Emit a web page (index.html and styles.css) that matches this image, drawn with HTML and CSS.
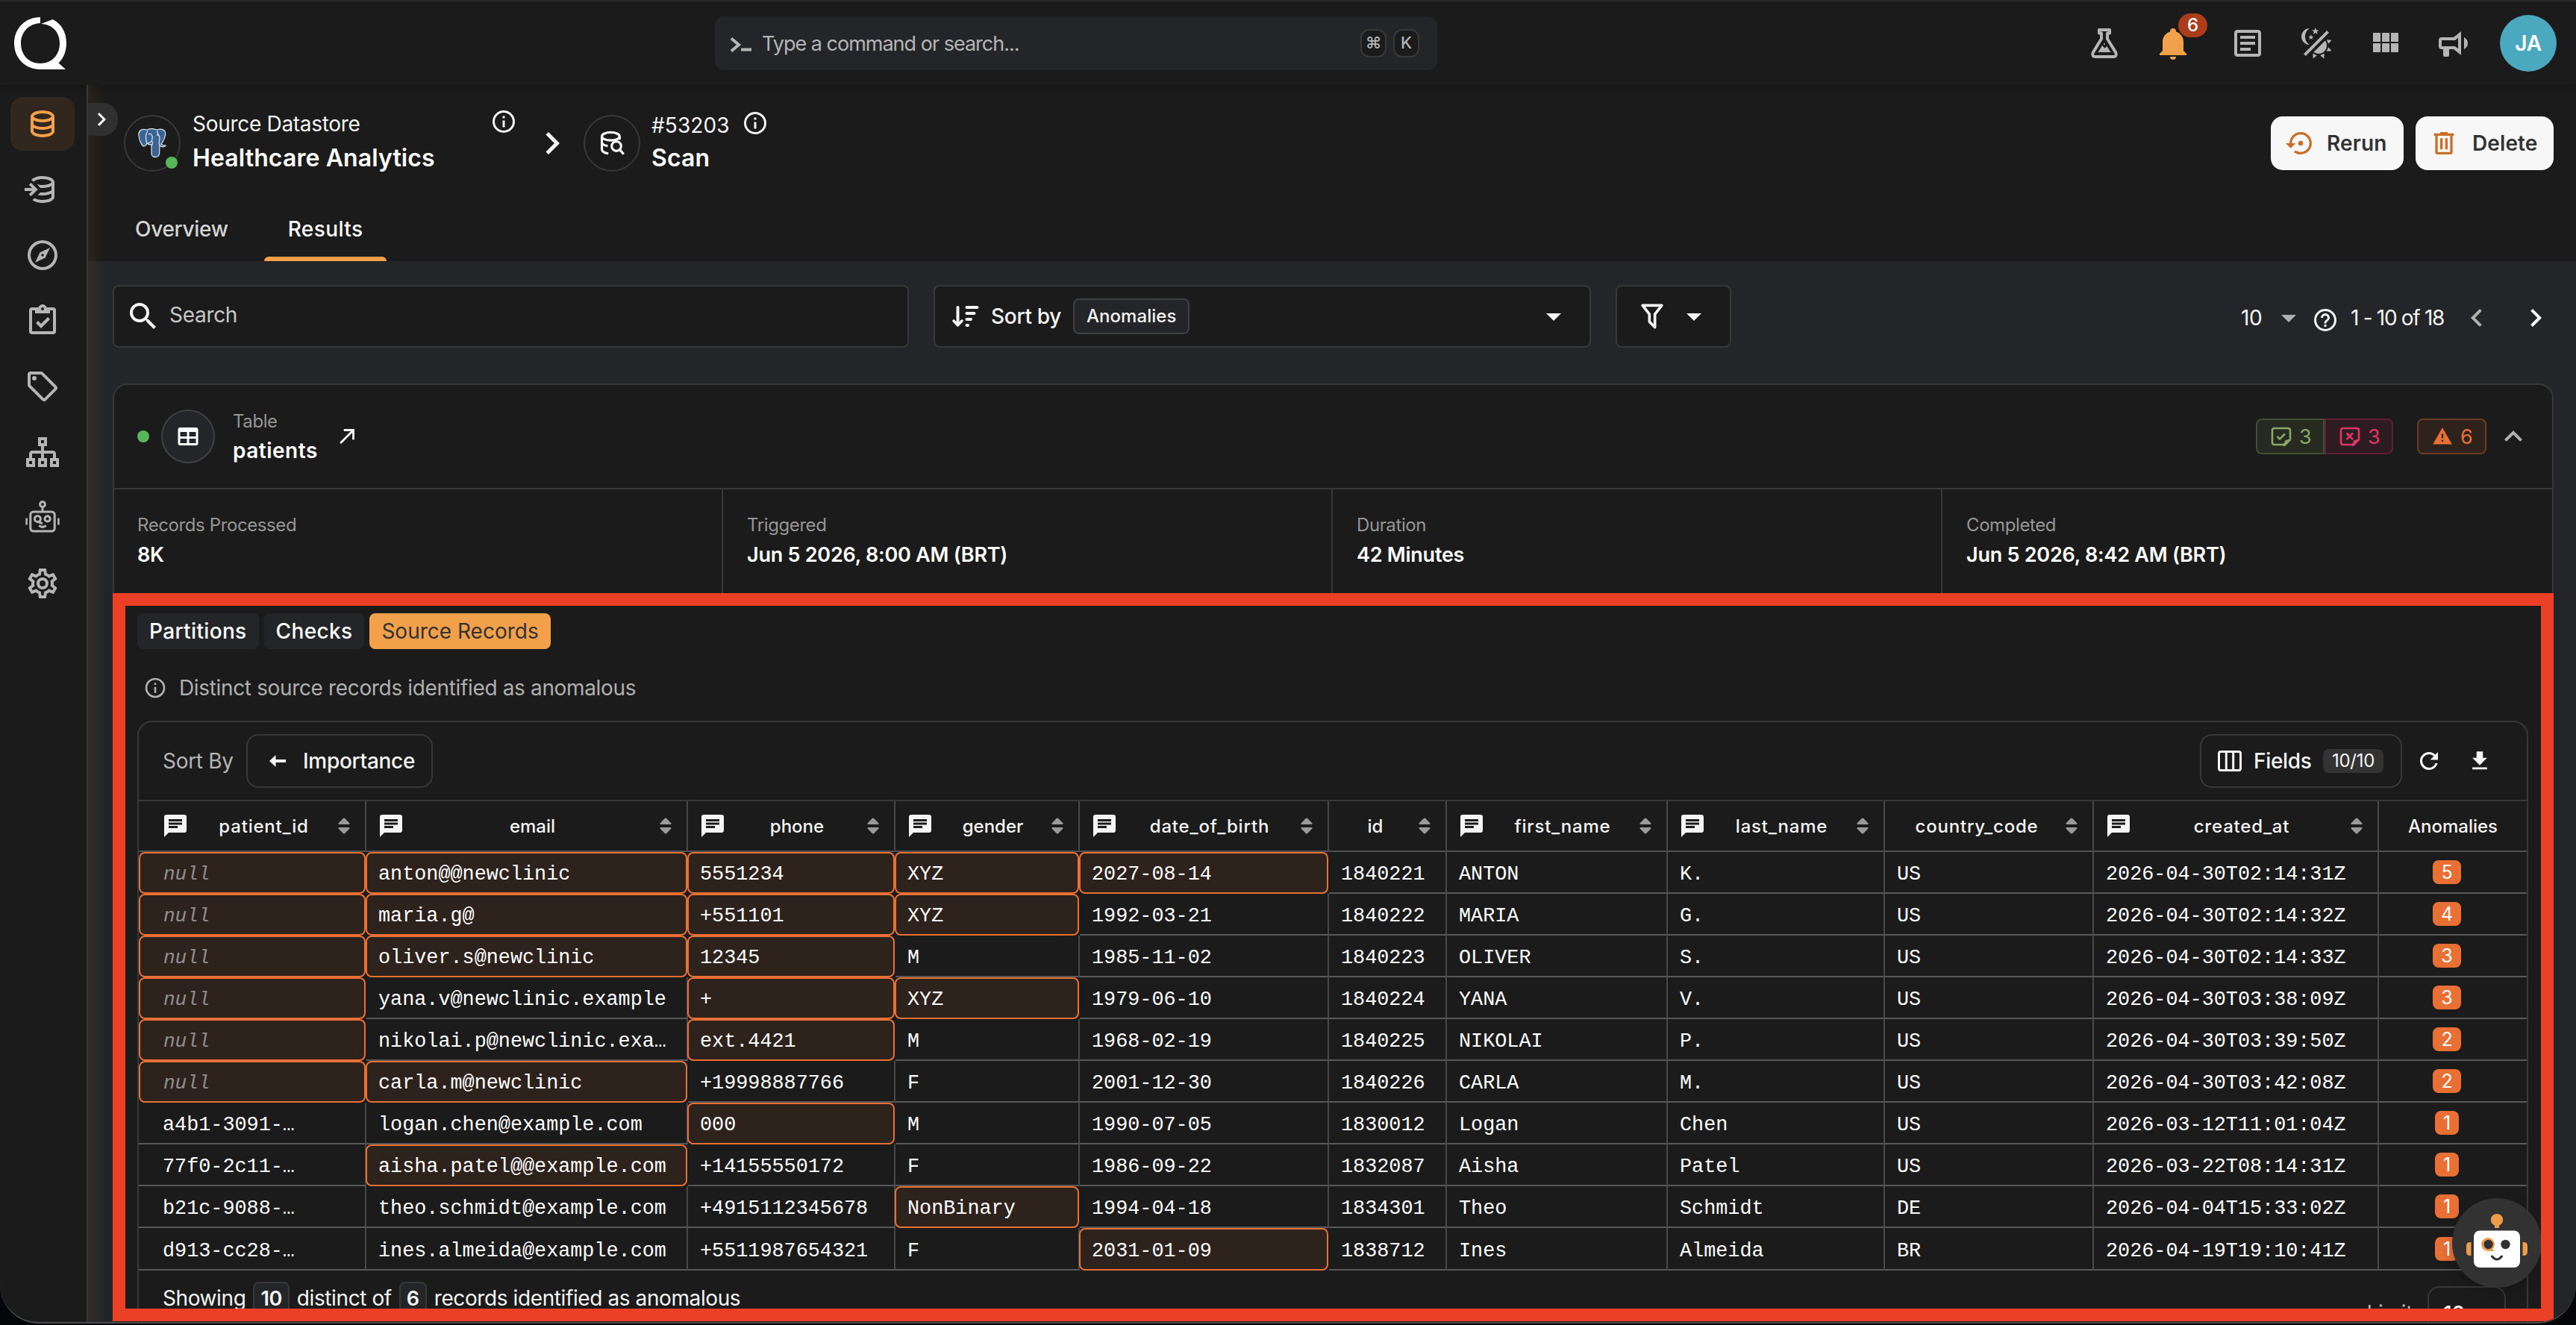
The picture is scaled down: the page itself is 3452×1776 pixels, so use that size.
FILE: index.html
```
<!DOCTYPE html>
<html lang="en">
<head>
    <meta charset="UTF-8">
    <meta name="viewport" content="width=device-width, initial-scale=1.0">
    <title>Scan Results - Healthcare Analytics</title>
    <link rel="stylesheet" href="styles.css">
</head>
<body>
    <!-- Icon sprite -->
    <svg class="sprite" xmlns="http://www.w3.org/2000/svg">
        <symbol id="i-db" viewBox="0 0 24 24"><path d="M12 3C7.58 3 4 4.79 4 7V17C4 19.21 7.59 21 12 21S20 19.21 20 17V7C20 4.79 16.42 3 12 3M18 17C18 17.5 15.87 19 12 19S6 17.5 6 17V14.77C7.61 15.55 9.72 16 12 16S16.39 15.55 18 14.77V17M18 12.45C16.7 13.4 14.42 14 12 14C9.58 14 7.3 13.4 6 12.45V9.64C7.47 10.47 9.61 11 12 11C14.39 11 16.53 10.47 18 9.64V12.45M12 9C8.13 9 6 7.5 6 7S8.13 5 12 5C15.87 5 18 6.5 18 7S15.87 9 12 9Z"/></symbol>
        <symbol id="i-db-in" viewBox="0 0 24 24"><path d="M12 3C8.6 3 5.7 4 4.5 5.6L6.6 7.3C6.2 7.100 6 7 6.100 6.800C6.500 6.200 8.600 5 12 5C15.870 5 18 6.500 18 7S15.870 9 12 9C10.500 9 9.200 8.800 8.200 8.400L10.500 10.900C11 11 11.500 11 12 11C14.390 11 16.530 10.470 18 9.640V12.450C16.700 13.400 14.420 14 12 14H10.600L8.700 15.800C9.700 15.930 10.900 16 12 16C14.280 16 16.390 15.550 18 14.770V17C18 17.500 15.870 19 12 19C9.400 19 7.600 18.300 6.700 17.700L5.200 19.100C6.700 20.300 9.200 21 12 21C16.410 21 20 19.210 20 17V7C20 4.790 16.420 3 12 3Z"/><path d="M0 11H5L2.900 8.900L4.300 7.500L8.800 12L4.300 16.500L2.900 15.100L5 13H0Z"/></symbol>
        <symbol id="i-compass" viewBox="0 0 24 24"><path d="M7,17L10.2,10.2L17,7L13.8,13.8L7,17M12,11.1A0.9,0.9 0 0,0 11.1,12A0.9,0.9 0 0,0 12,12.9A0.9,0.9 0 0,0 12.9,12A0.9,0.9 0 0,0 12,11.1M12,2A10,10 0 0,1 22,12A10,10 0 0,1 12,22A10,10 0 0,1 2,12A10,10 0 0,1 12,2M12,4A8,8 0 0,0 4,12A8,8 0 0,0 12,20A8,8 0 0,0 20,12A8,8 0 0,0 12,4Z"/></symbol>
        <symbol id="i-clipboard" viewBox="0 0 24 24"><path d="M19,3H14.82C14.4,1.84 13.3,1 12,1C10.7,1 9.6,1.84 9.18,3H5A2,2 0 0,0 3,5V19A2,2 0 0,0 5,21H19A2,2 0 0,0 21,19V5A2,2 0 0,0 19,3M12,3A1,1 0 0,1 13,4A1,1 0 0,1 12,5A1,1 0 0,1 11,4A1,1 0 0,1 12,3M7,7H17V5H19V19H5V5H7V7M7.5,13.5L9,12L11,14L15.5,9.5L17,11L11,17L7.5,13.5Z"/></symbol>
        <symbol id="i-tag" viewBox="0 0 24 24"><path d="M21.41 11.58L12.41 2.58A2 2 0 0 0 11 2H4A2 2 0 0 0 2 4V11A2 2 0 0 0 2.59 12.42L11.59 21.42A2 2 0 0 0 13 22A2 2 0 0 0 14.41 21.41L21.41 14.41A2 2 0 0 0 22 13A2 2 0 0 0 21.41 11.58M13 20L4 11V4H11L20 13M6.5 5A1.5 1.5 0 1 1 5 6.5A1.5 1.5 0 0 1 6.5 5Z"/></symbol>
        <symbol id="i-sitemap" viewBox="0 0 24 24"><path d="M9 2V8H11V11H5C3.89 11 3 11.89 3 13V16H1V22H7V16H5V13H11V16H9V22H15V16H13V13H19V16H17V22H23V16H21V13C21 11.89 20.11 11 19 11H13V8H15V2H9M11 4H13V6H11V4M3 18H5V20H3V18M11 18H13V20H11V18M19 18H21V20H19V18Z"/></symbol>
        <symbol id="i-robot" viewBox="0 0 24 24"><g fill="none" stroke="currentColor" stroke-width="1.5"><circle cx="12" cy="3" r="1.700"/><path d="M12 4.700V8"/><rect x="3.900" y="8" width="16.200" height="13" rx="2"/><path d="M1.300 12.200V16.700M22.700 12.200V16.700" stroke-width="1.300"/><circle cx="8.700" cy="12.700" r="2"/><path d="M9.500 15L12 15.800"/><circle cx="15.300" cy="12.700" r="1.800"/><path d="M9.600 17.200Q12 19.200 14.400 17.200"/></g></symbol>
        <symbol id="i-cog" viewBox="0 0 24 24"><path d="M12,8A4,4 0 0,1 16,12A4,4 0 0,1 12,16A4,4 0 0,1 8,12A4,4 0 0,1 12,8M12,10A2,2 0 0,0 10,12A2,2 0 0,0 12,14A2,2 0 0,0 14,12A2,2 0 0,0 12,10M10,22C9.75,22 9.54,21.82 9.5,21.58L9.13,18.93C8.5,18.68 7.96,18.34 7.44,17.94L4.95,18.95C4.73,19.03 4.46,18.95 4.34,18.73L2.34,15.27C2.21,15.05 2.27,14.78 2.46,14.63L4.57,12.97L4.5,12L4.57,11L2.46,9.37C2.27,9.22 2.21,8.95 2.34,8.73L4.34,5.27C4.46,5.05 4.73,4.96 4.95,5.05L7.44,6.05C7.96,5.66 8.5,5.32 9.13,5.07L9.5,2.42C9.54,2.18 9.75,2 10,2H14C14.25,2 14.46,2.18 14.5,2.42L14.87,5.07C15.5,5.32 16.04,5.66 16.56,6.05L19.05,5.05C19.27,4.96 19.54,5.05 19.66,5.27L21.66,8.73C21.79,8.95 21.73,9.22 21.54,9.37L19.43,11L19.5,12L19.43,13L21.54,14.63C21.73,14.78 21.79,15.05 21.66,15.27L19.66,18.73C19.54,18.95 19.27,19.04 19.05,18.95L16.56,17.95C16.04,18.34 15.5,18.68 14.87,18.93L14.5,21.58C14.46,21.82 14.25,22 14,22H10M11.25,4L10.88,6.61C9.68,6.86 8.62,7.5 7.85,8.39L5.44,7.35L4.69,8.65L6.8,10.2C6.4,11.37 6.4,12.64 6.8,13.8L4.68,15.36L5.43,16.66L7.86,15.62C8.63,16.5 9.68,17.14 10.87,17.38L11.24,20H12.76L13.13,17.39C14.32,17.14 15.37,16.5 16.14,15.62L18.57,16.66L19.32,15.36L17.2,13.81C17.6,12.64 17.6,11.37 17.2,10.2L19.31,8.65L18.56,7.35L16.15,8.39C15.38,7.5 14.32,6.86 13.12,6.62L12.75,4H11.25Z"/></symbol>
        <symbol id="i-prompt" viewBox="0 0 30 20"><path d="M2 1.500L12 10L2 18.500" fill="none" stroke="currentColor" stroke-width="4"/><path d="M15 14.500H29V18.500H15Z"/></symbol>
        <symbol id="i-flask" viewBox="0 0 24 24"><path d="M8.500 3H15.500V5.200H14V9L19.600 18.200C20.300 19.600 19.800 21 18.200 21H5.800C4.200 21 3.700 19.600 4.400 18.200L10 9V5.200H8.500Z" fill="none" stroke="currentColor" stroke-width="2" stroke-linejoin="round"/><path d="M7.800 18L10.500 13.500L12.200 15.300L13.800 14L16.200 18Z"/><circle cx="12" cy="12.500" r=".5"/></symbol>
        <symbol id="i-bell" viewBox="0 0 24 24"><path d="M21,19V20H3V19L5,17V11C5,7.9 7.03,5.17 10,4.29C10,4.19 10,4.1 10,4A2,2 0 0,1 12,2A2,2 0 0,1 14,4C14,4.1 14,4.19 14,4.29C16.97,5.17 19,7.9 19,11V17L21,19M14,21A2,2 0 0,1 12,23A2,2 0 0,1 10,21"/></symbol>
        <symbol id="i-text" viewBox="0 0 24 24"><path d="M5,3C3.89,3 3,3.89 3,5V19C3,20.11 3.89,21 5,21H19C20.11,21 21,20.11 21,19V5C21,3.89 20.11,3 19,3H5M5,5H19V19H5V5M7,7V9H17V7H7M7,11V13H17V11H7M7,15V17H14V15H7Z"/></symbol>
        <symbol id="i-theme" viewBox="0 0 24 24"><path d="M7.5,2C5.71,3.15 4.5,5.18 4.5,7.5C4.5,9.82 5.71,11.85 7.53,13C4.46,13 2,10.54 2,7.5A5.5,5.5 0 0,1 7.5,2M19.07,3.5L20.5,4.93L4.93,20.5L3.5,19.07L19.07,3.5M12.89,5.93L11.41,5L9.97,6L10.39,4.3L9,3.24L10.75,3.12L11.33,1.47L12,3.1L13.73,3.13L12.38,4.26L12.89,5.93M9.59,9.54L8.43,8.81L7.31,9.59L7.65,8.27L6.56,7.44L7.92,7.35L8.37,6.06L8.88,7.33L10.24,7.36L9.19,8.23L9.59,9.54M19,13.5A5.5,5.5 0 0,1 13.5,19C12.28,19 11.15,18.6 10.24,17.93L17.93,10.24C18.6,11.15 19,12.28 19,13.5M14.6,20.08L17.37,18.93L17.13,22.28L14.6,20.08M18.93,17.38L20.08,14.61L22.28,17.15L18.93,17.38M20.08,12.42L18.94,9.64L22.28,9.88L20.08,12.42M9.63,18.93L12.4,20.08L9.87,22.27L9.63,18.93Z"/></symbol>
        <symbol id="i-apps" viewBox="0 0 24 24"><path d="M16,5V11H21V5M10,11H15V5H10M16,18H21V12H16M10,18H15V12H10M4,18H9V12H4M4,11H9V5H4V11Z"/></symbol>
        <symbol id="i-horn" viewBox="0 0 24 24"><path d="M12,8H4A2,2 0 0,0 2,10V14A2,2 0 0,0 4,16H5V20A1,1 0 0,0 6,21H8A1,1 0 0,0 9,20V16H12L17,20V4L12,8M15,15.6L13,14H4V10H13L15,8.4V15.6M21.5,12C21.5,13.71 20.54,15.26 19,16V8C20.53,8.75 21.5,10.3 21.5,12Z"/></symbol>
        <symbol id="i-info" viewBox="0 0 24 24"><path d="M11,9H13V7H11M12,20C7.59,20 4,16.41 4,12C4,7.59 7.59,4 12,4C16.41,4 20,7.59 20,12C20,16.41 16.41,20 12,20M12,2A10,10 0 0,0 2,12A10,10 0 0,0 12,22A10,10 0 0,0 22,12A10,10 0 0,0 12,2M11,17H13V11H11V17Z"/></symbol>
        <symbol id="i-help" viewBox="0 0 24 24"><path d="M11,18H13V16H11V18M12,2A10,10 0 0,0 2,12A10,10 0 0,0 12,22A10,10 0 0,0 22,12A10,10 0 0,0 12,2M12,20C7.59,20 4,16.41 4,12C4,7.59 7.59,4 12,4C16.41,4 20,7.59 20,12C20,16.41 16.41,20 12,20M12,6A4,4 0 0,0 8,10H10A2,2 0 0,1 12,8A2,2 0 0,1 14,10C14,12 11,11.75 11,15H13C13,12.75 16,12.5 16,10A4,4 0 0,0 12,6Z"/></symbol>
        <symbol id="i-right" viewBox="0 0 24 24"><path d="M8.59,16.58L13.17,12L8.59,7.41L10,6L16,12L10,18L8.59,16.58Z"/></symbol>
        <symbol id="i-left" viewBox="0 0 24 24"><path d="M15.41,16.58L10.83,12L15.41,7.41L14,6L8,12L14,18L15.41,16.58Z"/></symbol>
        <symbol id="i-up" viewBox="0 0 24 24"><path d="M7.41,15.41L12,10.83L16.59,15.41L18,14L12,8L6,14L7.41,15.41Z"/></symbol>
        <symbol id="i-caret" viewBox="0 0 24 24"><path d="M7,10L12,15L17,10H7Z"/></symbol>
        <symbol id="i-scan" viewBox="0 0 24 24"><g fill="none" stroke="currentColor" stroke-width="2"><ellipse cx="11" cy="6.200" rx="7.500" ry="3.400"/><path d="M3.500 6.200V17.300C3.500 18.900 5.800 20.300 9 20.700M18.500 6.200V9M3.500 11.700C4.300 13 6.300 14 8.500 14.400"/><circle cx="15.800" cy="14.500" r="4"/><path d="M18.700 17.600L22 21.200"/></g></symbol>
        <symbol id="i-rerun" viewBox="0 0 24 24"><path d="M12,3A9,9 0 0,0 3,12H0L4,16L8,12H5A7,7 0 0,1 12,5A7,7 0 0,1 19,12A7,7 0 0,1 12,19C10.5,19 9.09,18.5 7.94,17.7L6.5,19.14C8.04,20.3 9.94,21 12,21A9,9 0 0,0 21,12A9,9 0 0,0 12,3M14,12A2,2 0 0,0 12,10A2,2 0 0,0 10,12A2,2 0 0,0 12,14A2,2 0 0,0 14,12Z"/></symbol>
        <symbol id="i-trash" viewBox="0 0 24 24"><path d="M9,3V4H4V6H5V19A2,2 0 0,0 7,21H17A2,2 0 0,0 19,19V6H20V4H15V3H9M7,6H17V19H7V6M9,8V17H11V8H9M13,8V17H15V8H13Z"/></symbol>
        <symbol id="i-search" viewBox="0 0 24 24"><path d="M9.5,3A6.5,6.5 0 0,1 16,9.5C16,11.11 15.41,12.59 14.44,13.73L14.71,14H15.5L20.5,19L19,20.5L14,15.5V14.71L13.73,14.44C12.59,15.41 11.11,16 9.5,16A6.5,6.5 0 0,1 3,9.5A6.5,6.5 0 0,1 9.5,3M9.5,5C7,5 5,7 5,9.5C5,12 7,14 9.5,14C12,14 14,12 14,9.5C14,7 12,5 9.5,5Z"/></symbol>
        <symbol id="i-sort" viewBox="0 0 36 28"><g fill="none" stroke="currentColor" stroke-linecap="round"><path d="M7.500 2V25" stroke-width="4"/><path d="M2 20L7.500 26L13 20" stroke-width="3.500" stroke-linejoin="round"/><path d="M19.500 2H33.500M19.500 10H29.500M19.500 18H25M19.500 26H21" stroke-width="4"/></g></symbol>
        <symbol id="i-filter" viewBox="0 0 24 24"><path d="M15,19.88C15.04,20.18 14.94,20.5 14.71,20.71C14.32,21.1 13.69,21.1 13.3,20.71L9.29,16.7C9.06,16.47 8.96,16.16 9,15.87V10.75L4.21,4.62C3.87,4.19 3.95,3.56 4.38,3.22C4.57,3.08 4.78,3 5,3V3H19V3C19.22,3 19.43,3.08 19.62,3.22C20.05,3.56 20.13,4.19 19.79,4.62L15,10.75V19.88M7.04,5L11,10.06V15.58L13,17.58V10.05L16.96,5H7.04Z"/></symbol>
        <symbol id="i-table" viewBox="0 0 24 24"><path d="M5,4H19A2,2 0 0,1 21,6V18A2,2 0 0,1 19,20H5A2,2 0 0,1 3,18V6A2,2 0 0,1 5,4M5,8V12H11V8H5M13,8V12H19V8H13M5,14V18H11V14H5M13,14V18H19V14H13Z"/></symbol>
        <symbol id="i-open" viewBox="0 0 24 24"><path d="M5,17.59L15.59,7H9V5H19V15H17V8.41L6.41,19L5,17.59Z"/></symbol>
        <symbol id="i-check" viewBox="0 0 28 28"><path d="M17 25H5C3 25 2 24 2 22V6C2 4 3 3 5 3H23C25 3 26 4 26 6V17" fill="none" stroke="currentColor" stroke-width="2.600"/><path d="M27.200 16.500V19L19 27H16.500V24L18.500 22C18.500 20 19.500 18.500 22 18.500Z"/><path d="M8.500 14L12 17.500L19 10.500" fill="none" stroke="currentColor" stroke-width="2.600"/></symbol>
        <symbol id="i-cross" viewBox="0 0 28 28"><path d="M17 25H5C3 25 2 24 2 22V6C2 4 3 3 5 3H23C25 3 26 4 26 6V17" fill="none" stroke="currentColor" stroke-width="2.600"/><path d="M27.200 16.500V19L19 27H16.500V24L18.500 22C18.500 20 19.500 18.500 22 18.500Z"/><path d="M9.500 9.500L18 18M18 9.500L9.500 18" fill="none" stroke="currentColor" stroke-width="2.600"/></symbol>
        <symbol id="i-alert" viewBox="0 0 24 24"><path d="M13 14H11V9H13M13 18H11V16H13M1 21H23L12 2L1 21Z"/></symbol>
        <symbol id="i-arrow-left" viewBox="0 0 24 18"><path d="M9.500 1L1 9L9.500 17V11H23V7H9.500Z"/></symbol>
        <symbol id="i-columns" viewBox="0 0 32 28"><path d="M4 1.500H28Q30.500 1.500 30.500 4V24Q30.500 26.500 28 26.500H4Q1.500 26.500 1.500 24V4Q1.500 1.500 4 1.500ZM11.300 2V26M20.700 2V26" fill="none" stroke="currentColor" stroke-width="3"/></symbol>
        <symbol id="i-refresh" viewBox="0 0 24 24"><path d="M17.65,6.35C16.2,4.9 14.21,4 12,4A8,8 0 0,0 4,12A8,8 0 0,0 12,20C15.73,20 18.84,17.45 19.73,14H17.65C16.83,16.33 14.61,18 12,18A6,6 0 0,1 6,12A6,6 0 0,1 12,6C13.66,6 15.14,6.69 16.22,7.78L13,11H20V4L17.65,6.35Z"/></symbol>
        <symbol id="i-download" viewBox="0 0 24 24"><path d="M5,20H19V18H5M19,9H15V3H9V9H5L12,16L19,9Z"/></symbol>
        <symbol id="i-message" viewBox="0 0 24 24"><path d="M20,2H4A2,2 0 0,0 2,4V22L6,18H20A2,2 0 0,0 22,16V4A2,2 0 0,0 20,2M6,9H18V11H6M14,14H6V12H14M18,8H6V6H18"/></symbol>
        <symbol id="i-order" viewBox="0 0 16 22"><path d="M7 .8Q8 0 9 .8L15.500 7.500Q16 9 14.500 9H1.500Q0 9 .5 7.500ZM7 21.200Q8 22 9 21.200L15.500 14.500Q16 13 14.500 13H1.500Q0 13 .5 14.500Z"/></symbol>
    </svg>

    <div class="window">
        <header class="topbar">
            <svg class="logo" viewBox="0 0 70 70"><path d="M35 0C15 0 0 15 0 35C0 55 15 70 35 70H69L59.500 61.500C66 55 70 46 70 35C70 20 63 8.500 51.500 3L36 9C51 9.500 61 20 61 35C61 51 50 62 35 62S9 51 9 35C9 20 20 8.500 35 8Z"/></svg>
            <div class="command">
                <svg class="prompt"><use href="#i-prompt"/></svg>
                <span class="placeholder">Type a command or search...</span>
                <kbd>⌘</kbd>
                <kbd>K</kbd>
            </div>
            <div class="actions">
                <svg class="icon"><use href="#i-flask"/></svg>
                <div class="bell">
                    <svg class="icon"><use href="#i-bell"/></svg>
                    <span class="bell-count">6</span>
                </div>
                <svg class="icon"><use href="#i-text"/></svg>
                <svg class="icon"><use href="#i-theme"/></svg>
                <svg class="icon"><use href="#i-apps"/></svg>
                <svg class="icon"><use href="#i-horn"/></svg>
                <span class="avatar">JA</span>
            </div>
        </header>

        <div class="layout">
            <nav class="sidebar">
                <a class="nav-item active"><svg class="icon"><use href="#i-db"/></svg></a>
                <a class="nav-item"><svg class="icon"><use href="#i-db-in"/></svg></a>
                <a class="nav-item"><svg class="icon"><use href="#i-compass"/></svg></a>
                <a class="nav-item"><svg class="icon"><use href="#i-clipboard"/></svg></a>
                <a class="nav-item"><svg class="icon"><use href="#i-tag"/></svg></a>
                <a class="nav-item"><svg class="icon"><use href="#i-sitemap"/></svg></a>
                <a class="nav-item"><svg class="icon"><use href="#i-robot"/></svg></a>
                <a class="nav-item"><svg class="icon"><use href="#i-cog"/></svg></a>
                <span class="expand"><svg><use href="#i-right"/></svg></span>
            </nav>

            <main class="main">
                <div class="page-head">
                    <div class="crumbs">
                        <div class="crumb-icon">
                            <svg class="postgres" viewBox="0 0 38 40">
                                <path d="M12 2C5 0 0 3 1 10C2 17 5 24 8 24C10 24 11 22 12 20C14 22 17 22 18 22V34C18 40 28 40 28.500 34L29 23C32 26 36 25 37 23C34 24 32 22 31 21C35 16 38 8 36 4C33 0 28 1 25 2C20 0 16 0 12 2Z"/>
                                <path class="line" d="M13 3C10 8 10 15 12 20M26 3C24 6 29 9 29 13C29 17 27 19 29 23M18 23C20 21 20 18 18 17M14 8C17 6 20 9 19 14C19 17 16 20 13 20M25 9H27"/>
                            </svg>
                            <span class="status-dot"></span>
                        </div>
                        <div class="crumb-text store">
                            <div class="crumb-label">Source Datastore</div>
                            <div class="crumb-title">Healthcare Analytics</div>
                        </div>
                        <svg class="info store-info"><use href="#i-info"/></svg>
                        <svg class="crumb-sep"><use href="#i-right"/></svg>
                        <div class="crumb-icon"><svg class="scan"><use href="#i-scan"/></svg></div>
                        <div class="crumb-text operation">
                            <div class="crumb-label"><span class="number">#53203</span><svg class="info"><use href="#i-info"/></svg></div>
                            <div class="crumb-title">Scan</div>
                        </div>
                    </div>
                    <div class="head-buttons">
                        <button class="btn rerun"><svg><use href="#i-rerun"/></svg>Rerun</button>
                        <button class="btn delete"><svg><use href="#i-trash"/></svg>Delete</button>
                    </div>
                </div>
                <div class="tabs">
                    <a class="tab">Overview</a>
                    <a class="tab active">Results</a>
                </div>

                <section class="content">
                    <div class="filters">
                        <div class="field search">
                            <svg class="icon"><use href="#i-search"/></svg>
                            <span class="search-text">Search</span>
                        </div>
                        <div class="field sort">
                            <svg class="sort-icon"><use href="#i-sort"/></svg>
                            <span class="sort-text">Sort by</span>
                            <span class="sort-value">Anomalies</span>
                            <svg class="icon"><use href="#i-caret"/></svg>
                        </div>
                        <div class="field filter">
                            <svg class="filter-icon"><use href="#i-filter"/></svg>
                            <svg class="icon"><use href="#i-caret"/></svg>
                        </div>
                        <div class="pager">
                            <span class="page-size">10</span>
                            <svg class="icon muted"><use href="#i-caret"/></svg>
                            <svg class="help"><use href="#i-help"/></svg>
                            <span class="range">1 - 10 of 18</span>
                            <svg class="icon muted"><use href="#i-left"/></svg>
                            <svg class="icon next"><use href="#i-right"/></svg>
                        </div>
                    </div>

                    <div class="card">
                        <div class="card-head">
                            <span class="status-dot"></span>
                            <div class="table-icon"><svg><use href="#i-table"/></svg></div>
                            <div class="table-name">
                                <div class="small-label">Table</div>
                                <div class="name">patients</div>
                            </div>
                            <svg class="open"><use href="#i-open"/></svg>
                            <div class="chips">
                                <span class="chip passed"><svg><use href="#i-check"/></svg>3</span>
                                <span class="chip failed"><svg><use href="#i-cross"/></svg>3</span>
                                <span class="chip anomalies"><svg><use href="#i-alert"/></svg>6</span>
                            </div>
                            <svg class="icon muted"><use href="#i-up"/></svg>
                        </div>
                        <div class="stats">
                            <div class="stat"><div class="small-label">Records Processed</div><div class="value">8K</div></div>
                            <div class="stat"><div class="small-label">Triggered</div><div class="value">Jun 5 2026, 8:00 AM (BRT)</div></div>
                            <div class="stat"><div class="small-label">Duration</div><div class="value">42 Minutes</div></div>
                            <div class="stat"><div class="small-label">Completed</div><div class="value">Jun 5 2026, 8:42 AM (BRT)</div></div>
                        </div>

                        <div class="records">
                            <div class="pills">
                                <span class="pill">Partitions</span>
                                <span class="pill">Checks</span>
                                <span class="pill active">Source Records</span>
                            </div>
                            <div class="hint"><svg><use href="#i-info"/></svg><span>Distinct source records identified as anomalous</span></div>

                            <div class="panel">
                                <div class="panel-bar">
                                    <span class="sort-by">Sort By</span>
                                    <span class="outline-btn importance"><svg><use href="#i-arrow-left"/></svg><span>Importance</span></span>
                                    <span class="outline-btn fields"><svg><use href="#i-columns"/></svg><span class="fields-text">Fields</span><span class="fields-count">10/10</span></span>
                                    <svg class="refresh"><use href="#i-refresh"/></svg>
                                    <svg class="download"><use href="#i-download"/></svg>
                                </div>
                                <div class="grid" id="grid"></div>
                                <div class="panel-foot">
                                    <div class="summary">
                                        <span>Showing</span><b>10</b><span>distinct of</span><b>6</b><span>records identified as anomalous</span>
                                    </div>
                                    <div class="limit"><span>Limit</span><span class="limit-value">10</span></div>
                                </div>
                            </div>
                        </div>
                    </div>
                </section>
            </main>
        </div>

        <div class="assistant">
            <svg viewBox="0 0 120 120">
                <path class="orange" d="M60 21A8 8 0 0 1 63 36.500V40H57V36.500A8 8 0 0 1 60 21ZM25.500 59V77H24Q19 77 19 72V64Q19 59 24 59ZM94.500 59V77H96Q101 77 101 72V64Q101 59 96 59Z"/>
                <rect class="white" x="29" y="43.500" width="62" height="49.500" rx="8"/>
                <circle class="ring" cx="48" cy="62" r="7.500"/>
                <path class="orange" d="M45 68.500H54L57 71H48Z"/>
                <circle class="dark" cx="48.500" cy="62" r="6.200"/>
                <circle class="dark" cx="71.500" cy="62" r="6.200"/>
                <path class="smile" d="M53.500 78Q60 86 66.500 78"/>
            </svg>
        </div>
        <div class="highlight"></div>
    </div>

    <script>
        // name, has description icon, sortable
        const columns = [
            ['patient_id', true, true],
            ['email', true, true],
            ['phone', true, true],
            ['gender', true, true],
            ['date_of_birth', true, true],
            ['id', false, true],
            ['first_name', true, true],
            ['last_name', true, true],
            ['country_code', false, true],
            ['created_at', true, true],
            ['Anomalies', false, false]
        ];

        // values, then the indexes of the anomalous cells
        const rows = [
            [[null, 'anton@@newclinic', '5551234', 'XYZ', '2027-08-14', '1840221', 'ANTON', 'K.', 'US', '2026-04-30T02:14:31Z', 5], [0, 1, 2, 3, 4]],
            [[null, 'maria.g@', '+551101', 'XYZ', '1992-03-21', '1840222', 'MARIA', 'G.', 'US', '2026-04-30T02:14:32Z', 4], [0, 1, 2, 3]],
            [[null, 'oliver.s@newclinic', '12345', 'M', '1985-11-02', '1840223', 'OLIVER', 'S.', 'US', '2026-04-30T02:14:33Z', 3], [0, 1, 2]],
            [[null, 'yana.v@newclinic.example', '+', 'XYZ', '1979-06-10', '1840224', 'YANA', 'V.', 'US', '2026-04-30T03:38:09Z', 3], [0, 2, 3]],
            [[null, 'nikolai.p@newclinic.exa…', 'ext.4421', 'M', '1968-02-19', '1840225', 'NIKOLAI', 'P.', 'US', '2026-04-30T03:39:50Z', 2], [0, 2]],
            [[null, 'carla.m@newclinic', '+19998887766', 'F', '2001-12-30', '1840226', 'CARLA', 'M.', 'US', '2026-04-30T03:42:08Z', 2], [0, 1]],
            [['a4b1-3091-…', 'logan.chen@example.com', '000', 'M', '1990-07-05', '1830012', 'Logan', 'Chen', 'US', '2026-03-12T11:01:04Z', 1], [2]],
            [['77f0-2c11-…', 'aisha.patel@@example.com', '+14155550172', 'F', '1986-09-22', '1832087', 'Aisha', 'Patel', 'US', '2026-03-22T08:14:31Z', 1], [1]],
            [['b21c-9088-…', 'theo.schmidt@example.com', '+4915112345678', 'NonBinary', '1994-04-18', '1834301', 'Theo', 'Schmidt', 'DE', '2026-04-04T15:33:02Z', 1], [3]],
            [['d913-cc28-…', 'ines.almeida@example.com', '+5511987654321', 'F', '2031-01-09', '1838712', 'Ines', 'Almeida', 'BR', '2026-04-19T19:10:41Z', 1], [4]]
        ];

        let html = '';
        for (const [name, described, sortable] of columns) {
            html += `<div class="th${described || !sortable ? '' : ' plain'}${name.includes('_') ? ' snake' : ''}">`;
            if (described) html += '<svg class="message"><use href="#i-message"/></svg>';
            html += `<span>${name}</span>`;
            if (sortable) html += '<svg class="order"><use href="#i-order"/></svg>';
            html += '</div>';
        }
        for (const [values, bad] of rows) {
            values.forEach((value, i) => {
                let cls = 'td';
                if (bad.includes(i)) cls += ' bad';
                if (value === null) cls += ' null';
                if (i === 10) {
                    html += `<div class="td count"><span>${value}</span></div>`;
                } else {
                    html += `<div class="${cls}">${value === null ? 'null' : value}</div>`;
                }
            });
        }
        document.getElementById('grid').innerHTML = html;
    </script>
</body>
</html>
```

FILE: styles.css
```
* { box-sizing: border-box; }
body { margin: 0; background: #05060a; color: #f5f5f5; font-family: Inter, "Liberation Sans", sans-serif; font-size: 28px; letter-spacing: -0.3px; }
svg { display: block; flex: none; fill: currentColor; }
.sprite { position: absolute; width: 0; height: 0; }
.icon { width: 48px; height: 48px; }
.muted { color: #b0b0b0; }

.window { position: relative; height: 1774px; overflow: hidden; background: #1b1b1b; border-top: 2px solid #262728; border-bottom: 2px solid #4c4c4e; border-radius: 0 0 52px 52px; }

/* top bar */
.topbar { display: flex; align-items: center; justify-content: space-between; height: 112px; padding: 0 26px 0 19px; box-shadow: 0 2px 12px rgba(0, 0, 0, .25); }
.logo { width: 70px; height: 70px; color: #fff; }
.command { display: flex; align-items: center; width: 968px; height: 72px; margin-left: 869px; padding: 0 24px 0 20px; border-radius: 12px; background: #242528; color: #b5b5b5; }
.prompt { width: 30px; height: 20px; margin: 4px 13px 0 0; }
.placeholder { flex: 1; font-size: 27px; letter-spacing: -1px; }
kbd { width: 35px; height: 38px; margin-left: 9px; border: 2px solid #383838; border-radius: 12px; background: #1b1b1b; font: 500 22px/33px Inter, "DejaVu Sans", sans-serif; text-align: center; }
.actions { display: flex; align-items: center; gap: 44px; margin-left: auto; color: #b5b5b5; }
.bell { position: relative; margin-right: 8px; color: #f2a04a; }
.bell-count { position: absolute; left: 31px; top: -16px; width: 39px; height: 32px; border-radius: 16px; background: #ad3d1a; color: #fff; font-size: 24px; font-weight: 500; line-height: 32px; text-align: center; }
.avatar { width: 76px; height: 76px; margin-left: -6px; border-radius: 50%; background: #4aa8bf; color: #fff; font-weight: 600; line-height: 76px; text-align: center; }

.layout { display: flex; height: 1658px; }

/* sidebar */
.sidebar { position: relative; flex: none; display: flex; flex-direction: column; gap: 16px; width: 118px; padding: 16px 0 0 14px; border-right: 2px solid #383838; color: #b5b5b5; }
.nav-item { display: flex; align-items: center; justify-content: center; width: 86px; height: 72px; border-radius: 16px; }
.nav-item.active { background: #32271e; color: #f2a04a; }
.expand { position: absolute; left: 118px; top: 24px; z-index: 1; width: 40px; height: 44px; padding: 4px 0 0; border-radius: 0 20px 20px 0; background: #303030; color: #f5f5f5; }
.expand svg { width: 36px; height: 36px; }

.main { flex: 1; min-width: 0; display: flex; flex-direction: column; background: linear-gradient(90deg, rgba(242, 160, 74, .06), transparent 22px); }

/* page header */
.page-head { display: flex; align-items: center; justify-content: space-between; height: 76px; margin: 40px 30px 34px 48px; }
.crumbs { display: flex; align-items: center; }
.crumb-icon { position: relative; display: flex; align-items: center; justify-content: center; width: 76px; height: 76px; border: 2px solid #383838; border-radius: 50%; }
.postgres { width: 38px; height: 40px; }
.postgres path { fill: #3a6396; stroke: #d5dbe2; stroke-width: 1.3; }
.postgres .line { fill: none; }
.scan { width: 38px; height: 38px; }
.status-dot { width: 16px; height: 16px; border-radius: 50%; background: #57b657; }
.crumb-icon .status-dot { position: absolute; left: 54px; top: 54px; }
.crumb-text { line-height: 46px; margin-bottom: 6px; }
.store { width: 381px; margin-left: 16px; }
.operation { line-height: 44px; margin: 0 0 4px 15px; }
.crumb-label { display: flex; align-items: center; gap: 16px; }
.number { letter-spacing: .1px; }
.crumb-title { font-size: 32px; font-weight: 600; letter-spacing: .1px; color: #fff; }
.info { width: 36px; height: 36px; }
.store-info { margin: 0 17px 58px 18px; }
.operation .info { margin-top: -6px; }
.crumb-sep { width: 60px; height: 60px; margin-right: 12px; }
.head-buttons { display: flex; gap: 16px; }
.btn { display: flex; align-items: center; height: 72px; padding: 0; border: 0; border-radius: 16px; background: #f7f7f7; color: #333; font: 600 28px Inter, sans-serif; letter-spacing: .1px; }
.btn svg { width: 40px; height: 40px; color: #c87028; }
.rerun { width: 178px; }
.rerun svg { margin: 0 15px 0 20px; }
.delete { width: 185px; }
.delete svg { margin: 0 18px 0 18px; }

.tabs { display: flex; gap: 16px; margin-left: 31px; }
.tab { height: 86px; padding: 0 32px; border-bottom: 6px solid transparent; font-weight: 500; line-height: 86px; color: #d5d5d5; }
.tab.active { position: relative; letter-spacing: .4px; color: #fff; }
.tab.active::after { content: ""; position: absolute; left: 0; right: 0; top: 80px; height: 6px; border-radius: 6px 6px 0 0; background: #f2a04a; }

/* filters */
.content { flex: 1; padding: 32px 30px 0 33px; background: linear-gradient(90deg, rgba(242, 160, 74, .06), transparent 22px) #242528; }
.filters { display: flex; align-items: center; height: 84px; margin-bottom: 48px; }
.field { display: flex; align-items: center; height: 84px; border: 2px solid #383838; border-radius: 8px; background: #1b1b1b; }
.search { width: 1067px; padding-left: 15px; }
.search-text { margin: -4px 0 0 11px; color: #c8c8c8; }
.sort { width: 881px; margin: 0 33px; padding: 0 24px 0 23px; }
.sort-icon { width: 36px; height: 28px; margin-right: 16px; }
.sort-text { width: 110px; font-weight: 500; }
.sort-value { height: 48px; margin-right: auto; padding: 0 16px; border: 2px solid #404144; border-radius: 8px; background: #242528; font-size: 24px; font-weight: 500; line-height: 44px; letter-spacing: .05px; }
.filter { width: 155px; }
.filter-icon { width: 44px; height: 44px; margin: 0 10px 0 25px; }
.pager { display: flex; align-items: center; margin: 4px 0 0 auto; }
.page-size { width: 40px; }
.help { width: 36px; height: 36px; margin: 6px 16px 0 7px; }
.range { width: 145px; letter-spacing: -1.3px; }
.next { margin-left: 31px; color: #fff; }

/* table card */
.card { height: 1400px; border: 2px solid #383838; border-radius: 20px; background: #1b1b1b; }
.card-head { display: flex; align-items: center; height: 140px; padding: 0 28px 0 31px; border-bottom: 2px solid #383838; }
.table-icon { display: flex; align-items: center; justify-content: center; width: 72px; height: 72px; margin: 0 24px 0 16px; border: 2px solid #404144; border-radius: 50%; background: #242528; color: #fff; }
.table-icon svg { width: 36px; height: 36px; }
.table-name { margin-bottom: 3px; line-height: 38px; }
.small-label { font-size: 24px; line-height: 40px; letter-spacing: -.4px; color: #969696; }
.name { width: 114px; font-weight: 600; font-size: 28px; letter-spacing: .5px; color: #fff; }
.open { width: 34px; height: 34px; margin-left: 22px; }
.chips { display: flex; margin: 0 12px 0 auto; }
.chip { display: flex; align-items: center; gap: 10px; width: 92px; height: 48px; padding-left: 18px; border: 2px solid; border-radius: 8px; font-size: 27px; }
.chip svg { width: 28px; height: 28px; }
.passed { border-color: #43502f; border-radius: 8px 0 0 8px; background: #262a20; color: #8aa765; }
.failed { border-color: #5e1f37; border-radius: 0 8px 8px 0; background: #2e1c22; color: #de3767; }
.anomalies { width: 93px; margin-left: 32px; border-color: #6b3b22; background: #2e221d; color: #e87035; }
.stats { display: grid; grid-template-columns: 816px 817px 817px 1fr; }
.stat { height: 145px; padding: 28px 0 0 32px; border-right: 2px solid #383838; }
.stat:first-child { padding-left: 31px; }
.stat:last-child { border-right: 0; }
.value { font-size: 27px; font-weight: 600; line-height: 40px; letter-spacing: -.25px; color: #fff; }

/* source records */
.records { padding: 21px 32px 0 31px; }
.pills { display: flex; gap: 7px; }
.pill { height: 48px; padding: 0 16px; border-radius: 8px; background: #242528; font-weight: 500; line-height: 48px; letter-spacing: .35px; color: #fff; }
.pill.active { background: #f2a04a; color: #333; font-weight: 400; letter-spacing: 0; }
.hint { display: flex; align-items: center; height: 40px; margin: 32px 0 24px 8px; color: #b0b0b0; }
.hint svg { width: 32px; height: 32px; margin-right: 16px; }
.hint span { letter-spacing: -.35px; }
.panel { border: 2px solid #383838; border-radius: 20px 20px 0 0; }
.panel-bar { display: flex; align-items: center; height: 106px; padding: 0 33px 0 32px; border-bottom: 2px solid #383838; }
.sort-by { width: 112px; color: #b5b5b5; }
.outline-btn { display: flex; align-items: center; height: 72px; border: 2px solid #383838; border-radius: 16px; }
.importance { width: 250px; padding-left: 28px; font-weight: 500; }
.importance svg { width: 24px; height: 18px; margin-right: 22px; }
.fields { width: 271px; margin: 0 18px 0 auto; padding-left: 22px; }
.fields svg { width: 32px; height: 28px; }
.fields-text { width: 93px; margin-left: 16px; font-weight: 500; }
.fields-count { width: 81px; height: 32px; border-radius: 8px; background: #333; font-size: 24px; line-height: 32px; text-align: center; }
.refresh { width: 36px; height: 36px; margin-right: 33px; }
.download { width: 34px; height: 34px; margin-right: 13px; }

.grid { display: grid; grid-template-columns: 305px 431px 278px 247px 334px 158px 296px 291px 280px 382px 198px; grid-template-rows: 68px repeat(9, 56px) 57px; }
.th { display: flex; align-items: center; padding: 0 20px 0 16px; border-right: 2px solid #484848; border-bottom: 2px solid #505050; font-size: 24px; font-weight: 500; letter-spacing: 0; }
.th.snake { letter-spacing: .8px; }
.th span { flex: 1; text-align: center; }
.th.plain span { padding-right: 12px; }
.message { width: 36px; height: 36px; margin-left: -1px; margin-right: 1px; }
.order { width: 16px; height: 22px; color: #999; }
.td { padding: 0 0 0 16px; border-right: 2px solid #484848; border-bottom: 2px solid #585858; font: 26.8px/60px "Liberation Mono", monospace; letter-spacing: 0; white-space: pre; color: #fff; }
.td.bad { margin: 0 1px 0 -1px; padding-left: 15px; border: 2px solid #e87035; border-radius: 8px; background: #2e221d; line-height: 56px; }
.td.null { font-size: 26px; font-style: italic; color: #8f8f8f; }
.th:nth-child(11n+1), .td:nth-child(11n+1) { padding-left: 32px; }
.td.bad:nth-child(11n+1) { margin-left: 0; padding-left: 31px; }
.th:nth-child(11n), .td:nth-child(11n) { border-right: 0; }
.td:nth-last-child(-n+11) { line-height: 62px; }
.td.bad:nth-last-child(-n+11) { line-height: 58px; }
.th:nth-child(11) { padding: 0; }
.count { display: flex; align-items: center; justify-content: center; padding: 0 16px 0 0; }
.count span { height: 32px; padding: 0 11px; border-radius: 8px; background: #e87035; font: 25px/32px Inter, sans-serif; }

.panel-foot { display: flex; justify-content: space-between; height: 160px; padding: 15px 28px 0 32px; }
.summary { display: flex; align-items: flex-start; line-height: 44px; letter-spacing: -.4px; }
.summary b { height: 48px; margin: 0 10px; padding: 0 8px; border: 2px solid #383838; border-radius: 8px; background: #242528; font-size: 27px; font-weight: 600; line-height: 42px; }
.limit { display: flex; gap: 20px; margin-top: 6px; line-height: 72px; color: #b5b5b5; }
.limit-value { width: 105px; height: 72px; padding-left: 19px; border: 2px solid #383838; border-radius: 16px; color: #fff; font-weight: 500; line-height: 70px; }

/* floating items */
.assistant { position: absolute; left: 3286px; top: 1604px; width: 120px; height: 120px; border-radius: 50%; background: #323232; box-shadow: 0 6px 20px rgba(0, 0, 0, .2); }
.assistant .orange { fill: #ec9c4a; }
.assistant .white { fill: #fff; }
.assistant .dark { fill: #323232; }
.assistant .ring { fill: none; stroke: #ec9c4a; stroke-width: 3; }
.assistant .smile { fill: none; stroke: #323232; stroke-width: 3; stroke-linecap: round; }
.highlight { position: absolute; left: 151px; top: 793px; width: 3271px; height: 976px; border: 17px solid #eb3f26; }
```
